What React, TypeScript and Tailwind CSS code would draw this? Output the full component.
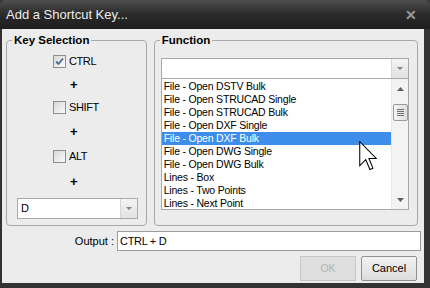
import React from "react";

const items = [
  "File - Open DSTV Bulk",
  "File - Open STRUCAD Single",
  "File - Open STRUCAD Bulk",
  "File - Open DXF Single",
  "File - Open DXF Bulk",
  "File - Open DWG Single",
  "File - Open DWG Bulk",
  "Lines - Box",
  "Lines - Two Points",
  "Lines - Next Point",
];

function CheckBox({ checked, label }: { checked?: boolean; label: string }) {
  return (
    <div className="flex items-center gap-[3px] h-[14px] ml-[46px]">
      <div className="w-[13px] h-[13px] border border-[#8e8f8f] bg-gradient-to-br from-[#d8d8d8] to-[#fbfbfb] flex items-center justify-center">
        {checked && (
          <svg width="9" height="9" viewBox="0 0 9 9">
            <path d="M1 4.5 L3.5 7 L8 1.5" fill="none" stroke="#4a6a9a" strokeWidth="1.8" />
          </svg>
        )}
      </div>
      <span className="text-[11px] tracking-[-0.4px] text-black leading-none">{label}</span>
    </div>
  );
}

function Plus() {
  return <div className="h-[14px] ml-[63px] text-[13px] font-bold text-black leading-[14px]">+</div>;
}

function DropButton() {
  return (
    <div className="w-[17px] h-full border-l border-[#d5d5d5] bg-gradient-to-b from-[#f4f4f4] to-[#e2e2e2] flex items-center justify-center">
      <svg width="6" height="3" viewBox="0 0 6 3">
        <path d="M0 0 H6 L3 3 Z" fill="#808080" />
      </svg>
    </div>
  );
}

export default function App() {
  return (
    <div
      className="w-[430px] h-[288px] bg-[#333333] flex flex-col overflow-hidden"
      style={{ fontFamily: '"Liberation Sans", Arial, sans-serif' }}
    >
      {/* title bar */}
      <div className="h-[29px] shrink-0 rounded-t-[5px] bg-gradient-to-b from-[#4e4e4e] via-[#2a2a2a] to-[#1e1e1e] flex items-center justify-between pl-[6px] pr-[13px]">
        <span className="text-[13px] text-[#ececec]">Add a Shortcut Key...</span>
        <span className="text-[14px] font-bold text-[#999999] leading-none">✕</span>
      </div>

      <div className="flex-1 bg-[#ececec] ml-[2px] mr-[6px] mb-[5px] flex flex-col pl-[4px] pr-[6px]">
        <div className="flex gap-[7px] pt-[4px] h-[197px]">
          {/* key selection */}
          <fieldset className="w-[141px] border border-[#a8a8a8] rounded-[4px] px-0 pb-0 flex flex-col">
            <legend className="ml-[5px] px-[2px] text-[11.5px] font-bold text-black leading-[14px]">Key Selection</legend>
            <div className="flex flex-col items-start pt-[7px]">
              <CheckBox checked label="CTRL" />
              <div className="h-[10px]" />
              <Plus />
              <div className="h-[8px]" />
              <CheckBox label="SHIFT" />
              <div className="h-[11px]" />
              <Plus />
              <div className="h-[10px]" />
              <CheckBox label="ALT" />
              <div className="h-[12px]" />
              <Plus />
            </div>
            <div className="mt-[9px] ml-[10px] mr-[8px] h-[21px] border border-[#a9a9a9] bg-white flex items-center">
              <span className="flex-1 pl-[3px] text-[11px] text-black">D</span>
              <DropButton />
            </div>
          </fieldset>

          {/* function */}
          <fieldset className="w-[265px] border border-[#a8a8a8] rounded-[4px] px-0 pb-0 flex flex-col">
            <legend className="ml-[5px] px-[2px] text-[11.5px] font-bold text-black leading-[14px]">Function</legend>
            <div className="ml-[6px] mr-[8px] mt-[11px] h-[21px] border border-[#a9a9a9] bg-white flex justify-end">
              <DropButton />
            </div>
            <div className="relative ml-[6px] mr-[8px] h-[131px] border border-t-0 border-[#a9a9a9] bg-white flex">
              <div className="flex-1 flex flex-col pt-[1px]">
                {items.map((t) => (
                  <div
                    key={t}
                    className={
                      t === "File - Open DXF Bulk"
                        ? "h-[13px] pl-[2px] bg-[#3d8eea] text-white text-[10.5px] leading-[13px] tracking-[-0.2px]"
                        : "h-[13px] pl-[2px] text-black text-[10.5px] leading-[13px] tracking-[-0.2px]"
                    }
                  >
                    {t}
                  </div>
                ))}
              </div>
              {/* scrollbar */}
              <div className="w-[17px] bg-[#f3f3f3] border-l border-[#e6e6e6] flex flex-col items-center">
                <div className="h-[20px] flex items-center justify-center">
                  <svg width="7" height="4" viewBox="0 0 7 4">
                    <path d="M0 4 H7 L3.5 0 Z" fill="#606060" />
                  </svg>
                </div>
                <div className="mt-[5px] w-[15px] h-[17px] border border-[#9a9a9a] rounded-[2px] bg-gradient-to-r from-[#f6f6f6] to-[#dedede] flex flex-col items-center justify-center gap-[1px]">
                  <div className="w-[7px] h-px bg-[#6f6f6f]" />
                  <div className="w-[7px] h-px bg-[#6f6f6f]" />
                  <div className="w-[7px] h-px bg-[#6f6f6f]" />
                  <div className="w-[7px] h-px bg-[#6f6f6f]" />
                </div>
                <div className="flex-1" />
                <div className="h-[18px] flex items-center justify-center">
                  <svg width="7" height="4" viewBox="0 0 7 4">
                    <path d="M0 0 H7 L3.5 4 Z" fill="#606060" />
                  </svg>
                </div>
              </div>
              {/* mouse cursor */}
              <svg className="absolute right-[31px] top-[62px]" width="18" height="30" viewBox="0 0 12 20">
                <path
                  d="M0.5 0.5 L0.5 16.5 L4.5 12.5 L7.3 19 L9.3 18.1 L6.6 11.6 L11.5 11.6 Z"
                  fill="white"
                  stroke="black"
                  strokeWidth="0.7"
                />
              </svg>
            </div>
          </fieldset>
        </div>

        {/* output */}
        <div className="flex items-center mt-[5px] h-[20px]">
          <div className="w-[111px] text-right pr-[3px] text-[11px] text-black">Output :</div>
          <div className="flex-1 h-[20px] mr-[-3px] border border-[#9c9c9c] bg-white pl-[2px] text-[11px] leading-[18px] tracking-[-0.3px] text-black whitespace-pre">
            CTRL + D
          </div>
        </div>

        {/* buttons */}
        <div className="flex justify-end gap-[5px] mt-[5px] pr-[1px]">
          <div className="w-[56px] h-[25px] border border-[#c6c6c6] bg-[#dedede] flex items-center justify-center text-[10.5px] text-[#b4b4b4]">
            OK
          </div>
          <div className="w-[56px] h-[25px] border border-[#8b9196] rounded-[2px] bg-gradient-to-b from-[#f2f2f2] to-[#dcdcdc] flex items-center justify-center text-[11px] text-black">
            Cancel
          </div>
        </div>
      </div>
    </div>
  );
}
